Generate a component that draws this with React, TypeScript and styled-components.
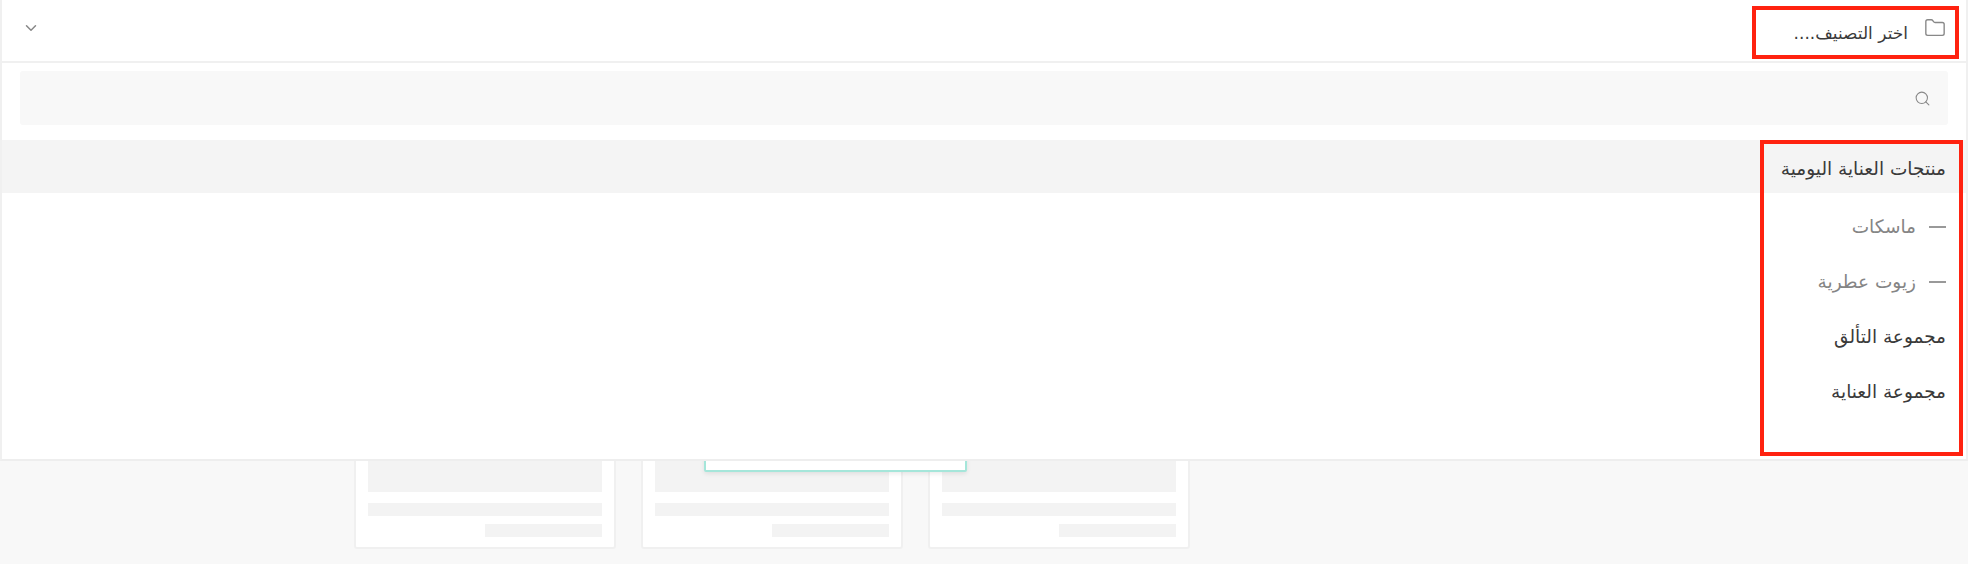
import React from "react";
import styled, { createGlobalStyle } from "styled-components";
import { ChevronDown, Folder, Search } from "lucide-react";

const Global = createGlobalStyle`
  html, body { margin: 0; padding: 0; background: #f7f7f7; }
  body { font-family: "DejaVu Sans", "Noto Sans", sans-serif; }
`;
const Page = styled.div`
  position: relative;
  width: 1968px;
  height: 564px;
  overflow: hidden;
  background: #f8f8f8;
`;
const CardRow = styled.div`
  display: flex;
  gap: 25px;
  padding: 400px 0 0 354px;
`;
const Card = styled.div`
  width: 262px;
  height: 149px;
  box-sizing: border-box;
  background: #fff;
  border: 2px solid #f0f0f0;
  border-radius: 3px;
  padding: 0 12px;
  display: flex;
  flex-direction: column;
  align-items: flex-end;
`;
const CardImage = styled.div`
  width: 100%;
  height: 90px;
  flex: none;
  background: #f3f3f3;
`;
const CardLine = styled.div<{ $short?: boolean }>`
  width: ${(p) => (p.$short ? "50%" : "100%")};
  height: 13px;
  flex: none;
  background: #f3f3f3;
  margin-top: ${(p) => (p.$short ? "8px" : "11px")};
`;
const Notice = styled.div`
  position: absolute;
  left: 704px;
  top: 440px;
  width: 263px;
  height: 32px;
  box-sizing: border-box;
  background: #fff;
  border: 2px solid #a5e6da;
  border-radius: 2px;
  box-shadow: 0 2px 4px rgba(0, 0, 0, 0.08);
`;
const Panel = styled.div`
  position: absolute;
  left: 0;
  top: 0;
  width: 1968px;
  height: 461px;
  box-sizing: border-box;
  background: #fff;
  border-left: 2px solid #f0f0f0;
  border-right: 2px solid #f0f0f0;
  border-bottom: 2px solid #eeeeee;
  direction: rtl;
`;
const Header = styled.div`
  height: 63px;
  box-sizing: border-box;
  border-bottom: 2px solid #f0f0f0;
  display: flex;
  align-items: center;
  padding: 0 20px;
`;
const HeaderIcon = styled(Folder)`
  width: 22px;
  height: 22px;
  color: #888;
  margin-top: -6px;
  flex: none;
`;
const HeaderLabel = styled.span`
  font-size: 17px;
  margin: 5px 16px 0 0;
  color: #3a3a3a;
  flex: 1;
`;
const Chevron = styled(ChevronDown)`
  width: 18px;
  height: 18px;
  color: #888;
  margin-top: -6px;
  flex: none;
`;
const SearchBox = styled.div`
  margin: 8px 18px 0;
  height: 54px;
  background: #f8f8f8;
  border-radius: 3px;
  display: flex;
  align-items: center;
  padding-right: 17px;
`;
const SearchIcon = styled(Search)`
  width: 17px;
  height: 17px;
  color: #888;
`;
const List = styled.ul`
  list-style: none;
  margin: 15px 0 0;
  padding: 0;
`;
const Row = styled.li<{ $active?: boolean; $child?: boolean }>`
  height: ${(p) => (p.$active ? "53px" : "55px")};
  box-sizing: border-box;
  margin-bottom: ${(p) => (p.$active ? "6px" : "0")};
  padding: ${(p) => (p.$active ? "4px 20px 0 0" : "0 20px 0 0")};
  display: flex;
  align-items: center;
  gap: 13px;
  font-size: 18.5px;
  color: ${(p) => (p.$child ? "#858585" : "#3a3a3a")};
  background: ${(p) => (p.$active ? "#f4f4f4" : "transparent")};
`;
const Dash = styled.span`
  width: 17px;
  height: 2px;
  background: #999;
  flex: none;
`;
const Highlight = styled.div<{ $x: number; $y: number; $w: number; $h: number }>`
  position: absolute;
  left: ${(p) => p.$x}px;
  top: ${(p) => p.$y}px;
  width: ${(p) => p.$w}px;
  height: ${(p) => p.$h}px;
  box-sizing: border-box;
  border: 4px solid #ff2210;
`;

const rows = [
  { label: "منتجات العناية اليومية", active: true },
  { label: "ماسكات", child: true },
  { label: "زيوت عطرية", child: true },
  { label: "مجموعة التألق" },
  { label: "مجموعة العناية" },
];

export default function App() {
  return (
    <Page>
      <Global />
      <CardRow>
        {[0, 1, 2].map((i) => (
          <Card key={i}>
            <CardImage />
            <CardLine />
            <CardLine $short />
          </Card>
        ))}
      </CardRow>
      <Notice />
      <Panel>
        <Header>
          <HeaderIcon strokeWidth={1.5} />
          <HeaderLabel>اختر التصنيف....</HeaderLabel>
          <Chevron strokeWidth={2} />
        </Header>
        <SearchBox>
          <SearchIcon strokeWidth={1.5} />
        </SearchBox>
        <List>
          {rows.map((r) => (
            <Row key={r.label} $active={r.active} $child={r.child}>
              {r.child && <Dash />}
              {r.label}
            </Row>
          ))}
        </List>
      </Panel>
      <Highlight $x={1752} $y={6} $w={207} $h={53} />
      <Highlight $x={1760} $y={140} $w={203} $h={316} />
    </Page>
  );
}
